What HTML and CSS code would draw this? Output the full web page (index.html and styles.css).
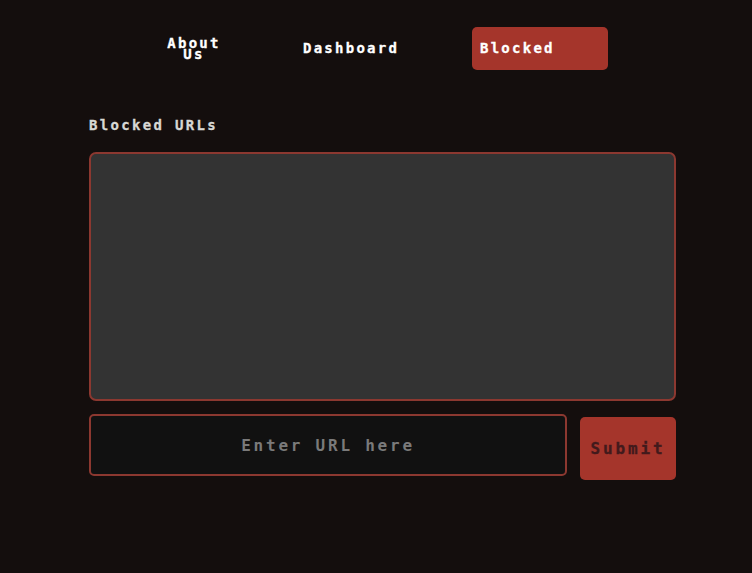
FILE: index.html
```html
<!DOCTYPE html>
<html lang="en">
<head>
<meta charset="utf-8">
<title>Blocked URLs</title>
<link rel="stylesheet" href="styles.css">
</head>
<body>
<nav class="nav">
  <a class="nav-item nav-about" href="#">About Us</a>
  <a class="nav-item nav-wide" href="#">Dashboard</a>
  <a class="nav-item nav-wide nav-active" href="#">Blocked</a>
</nav>
<main class="main">
  <h1 class="title">Blocked URLs</h1>
  <textarea class="list" readonly></textarea>
  <form class="entry">
    <input class="url" type="text" placeholder="Enter URL here">
    <button class="submit" type="button">Submit</button>
  </form>
</main>
</body>
</html>
```
FILE: styles.css
```css
html, body {
  margin: 0;
  height: 100%;
}
body {
  background: #140e0d;
  font-family: "DejaVu Sans Mono", "Liberation Mono", monospace;
  overflow: hidden;
}
.nav {
  display: flex;
  gap: 41px;
  padding: 27px 0 0 134px;
}
.nav-item {
  box-sizing: border-box;
  height: 43px;
  display: flex;
  align-items: center;
  padding: 0 8px;
  border-radius: 5px;
  color: #fff;
  font-size: 14px;
  font-weight: 700;
  letter-spacing: 2.25px;
  line-height: 11px;
  text-decoration: none;
  -webkit-text-stroke: 0.3px currentColor;
}
.nav-about {
  width: 120px;
  padding: 0 24px;
  text-align: center;
}
.nav-wide {
  width: 136px;
}
.nav-active {
  background: #a5352b;
}
.main {
  display: flex;
  flex-direction: column;
  padding: 47px 76px 0 89px;
}
.title {
  margin: 0 0 15px;
  color: #d8d8d4;
  font-size: 14px;
  font-weight: 700;
  letter-spacing: 2.32px;
  line-height: 16px;
  height: 20px;
  -webkit-text-stroke: 0.3px currentColor;
}
.list {
  display: block;
  box-sizing: border-box;
  width: 100%;
  height: 249px;
  margin: 0;
  padding: 8px;
  background: #333;
  border: 2px solid #8c3830;
  border-radius: 7px;
  outline: none;
  resize: none;
}
.entry {
  display: flex;
  align-items: flex-start;
  gap: 13px;
  margin-top: 13px;
}
.url {
  box-sizing: border-box;
  width: 478px;
  height: 62px;
  margin: 0;
  padding: 0 8px;
  background: #111;
  border: 2px solid #8c3830;
  border-radius: 5px;
  color: #ddd;
  font-family: inherit;
  font-size: 16px;
  letter-spacing: 2.77px;
  text-align: center;
  outline: none;
}
.url::placeholder {
  color: #7a7a7a;
  opacity: 1;
  font-weight: 700;
}
.submit {
  box-sizing: border-box;
  width: 96px;
  height: 63px;
  margin: 3px 0 0;
  padding: 0;
  background: #a5352b;
  border: 0;
  border-radius: 5px;
  color: #421a1c;
  font-family: inherit;
  font-size: 16px;
  font-weight: 700;
  letter-spacing: 2.87px;
  -webkit-text-stroke: 0.3px currentColor;
}
```
